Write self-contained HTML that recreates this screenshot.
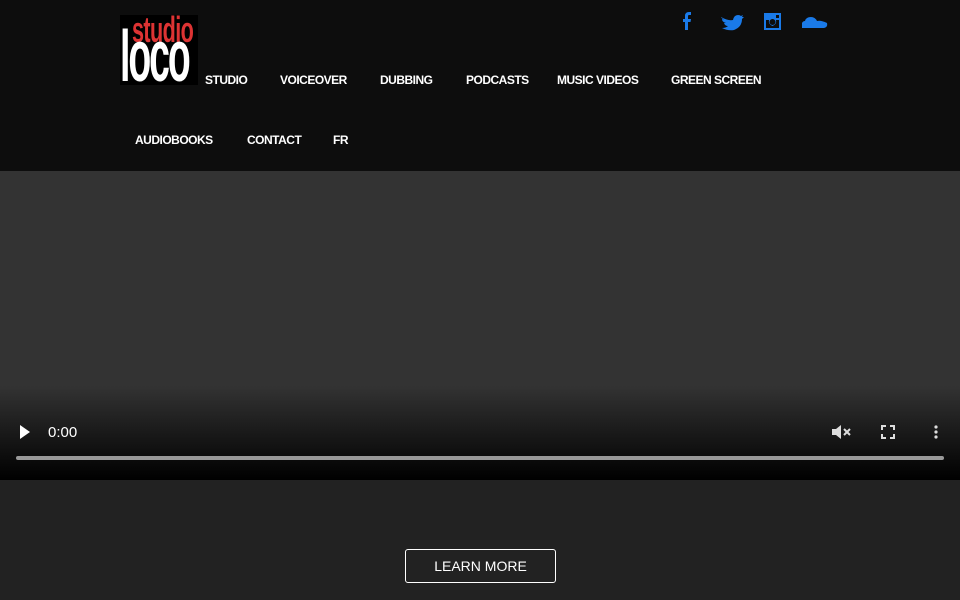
<!DOCTYPE html>
<html><head><style>
*{margin:0;padding:0;box-sizing:border-box}
body{width:960px;height:600px;background:#222;font-family:"Liberation Sans",sans-serif;overflow:hidden;position:relative}
.hdr{position:absolute;left:0;top:0;width:960px;height:171px;background:#0d0d0d}
.nav{position:absolute;color:#fff;font-size:12px;font-weight:bold;letter-spacing:-0.5px}
.logo{position:absolute;left:120px;top:15px;width:78px;height:70px;background:#000}
.s{position:absolute;left:12px;top:-6px;color:#d33;font-size:36px;font-weight:bold;transform:scaleX(0.6);transform-origin:left top;letter-spacing:-1px}
.l{position:absolute;left:0;top:6px;color:#fff;font-size:72px;font-weight:bold;transform:scaleX(0.52);transform-origin:left top;letter-spacing:-4px;line-height:72px}
.video{position:absolute;left:0;top:171px;width:960px;height:309px;background:linear-gradient(#333 0,#333 215px,#000 309px)}
.btn{position:absolute;left:405px;top:549px;width:151px;height:34px;border:1px solid #fff;border-radius:3px;color:#fff;font-size:14px;text-align:center;line-height:32px}
</style></head><body>
<div class="hdr"></div>
<div class="nav" style="left:205px;top:73px">STUDIO</div>
<div class="nav" style="left:280px;top:73px">VOICEOVER</div>
<div class="nav" style="left:380px;top:73px">DUBBING</div>
<div class="nav" style="left:466px;top:73px">PODCASTS</div>
<div class="nav" style="left:557px;top:73px">MUSIC VIDEOS</div>
<div class="nav" style="left:671px;top:73px">GREEN SCREEN</div>
<div class="nav" style="left:135px;top:133px">AUDIOBOOKS</div>
<div class="nav" style="left:247px;top:133px">CONTACT</div>
<div class="nav" style="left:333px;top:133px">FR</div>
<div class="logo"><div class="s">studio</div><div class="l">loco</div></div>
<svg style="position:absolute;left:680px;top:11px" width="150" height="22" fill="#1a7ae8">
<path d="M5 19V11H3V8H5V5Q5 1 9 1H11V4H9Q8 4 8 5V8H11L10.5 11H8V19Z"/>
<path d="M41 6Q48 10 53 9Q54 4 58 4Q60 4 61 5L63 4L62 6L64 6L62 8Q62 16 54 19Q48 20 42 17Q46 17 48 15Q45 15 44 12H46Q42 11 42 8L44 8.5Q41 7 41 6Z"/>
<path d="M84 2H101V19H84ZM86 9V17H99V9H96Q97 13 92.5 15Q88 13 89 9ZM92.5 8A3 3 0 1 0 92.5 14A3 3 0 1 0 92.5 8ZM96 4V7H99V4Z" fill-rule="evenodd"/>
<path d="M122 17V12Q123 10 125 10Q126 6 131 6Q135 6 137 10Q141 9 147 12Q148 16 144 17Z"/>
</svg>
<div class="video"></div>
<svg style="position:absolute;left:0;top:420px" width="960" height="45">
<path d="M20 5L30 12L20 19Z" fill="#fff"/>
<text x="48" y="17" fill="#fff" font-family="Liberation Sans" font-size="15">0:00</text>
<path d="M832 9H836L841 5V19L836 15H832Z" fill="#ddd"/>
<path d="M844 9L850 15M850 9L844 15" stroke="#ddd" stroke-width="2"/>
<path d="M882 10V6H886M890 6H894V10M894 14V18H890M886 18H882V14" stroke="#ddd" stroke-width="2" fill="none"/>
<circle cx="936" cy="7" r="1.6" fill="#ddd"/><circle cx="936" cy="12" r="1.6" fill="#ddd"/><circle cx="936" cy="17" r="1.6" fill="#ddd"/>
<rect x="16" y="36" width="928" height="4" rx="2" fill="#999"/>
</svg>
<div class="btn">LEARN MORE</div>
</body></html>
